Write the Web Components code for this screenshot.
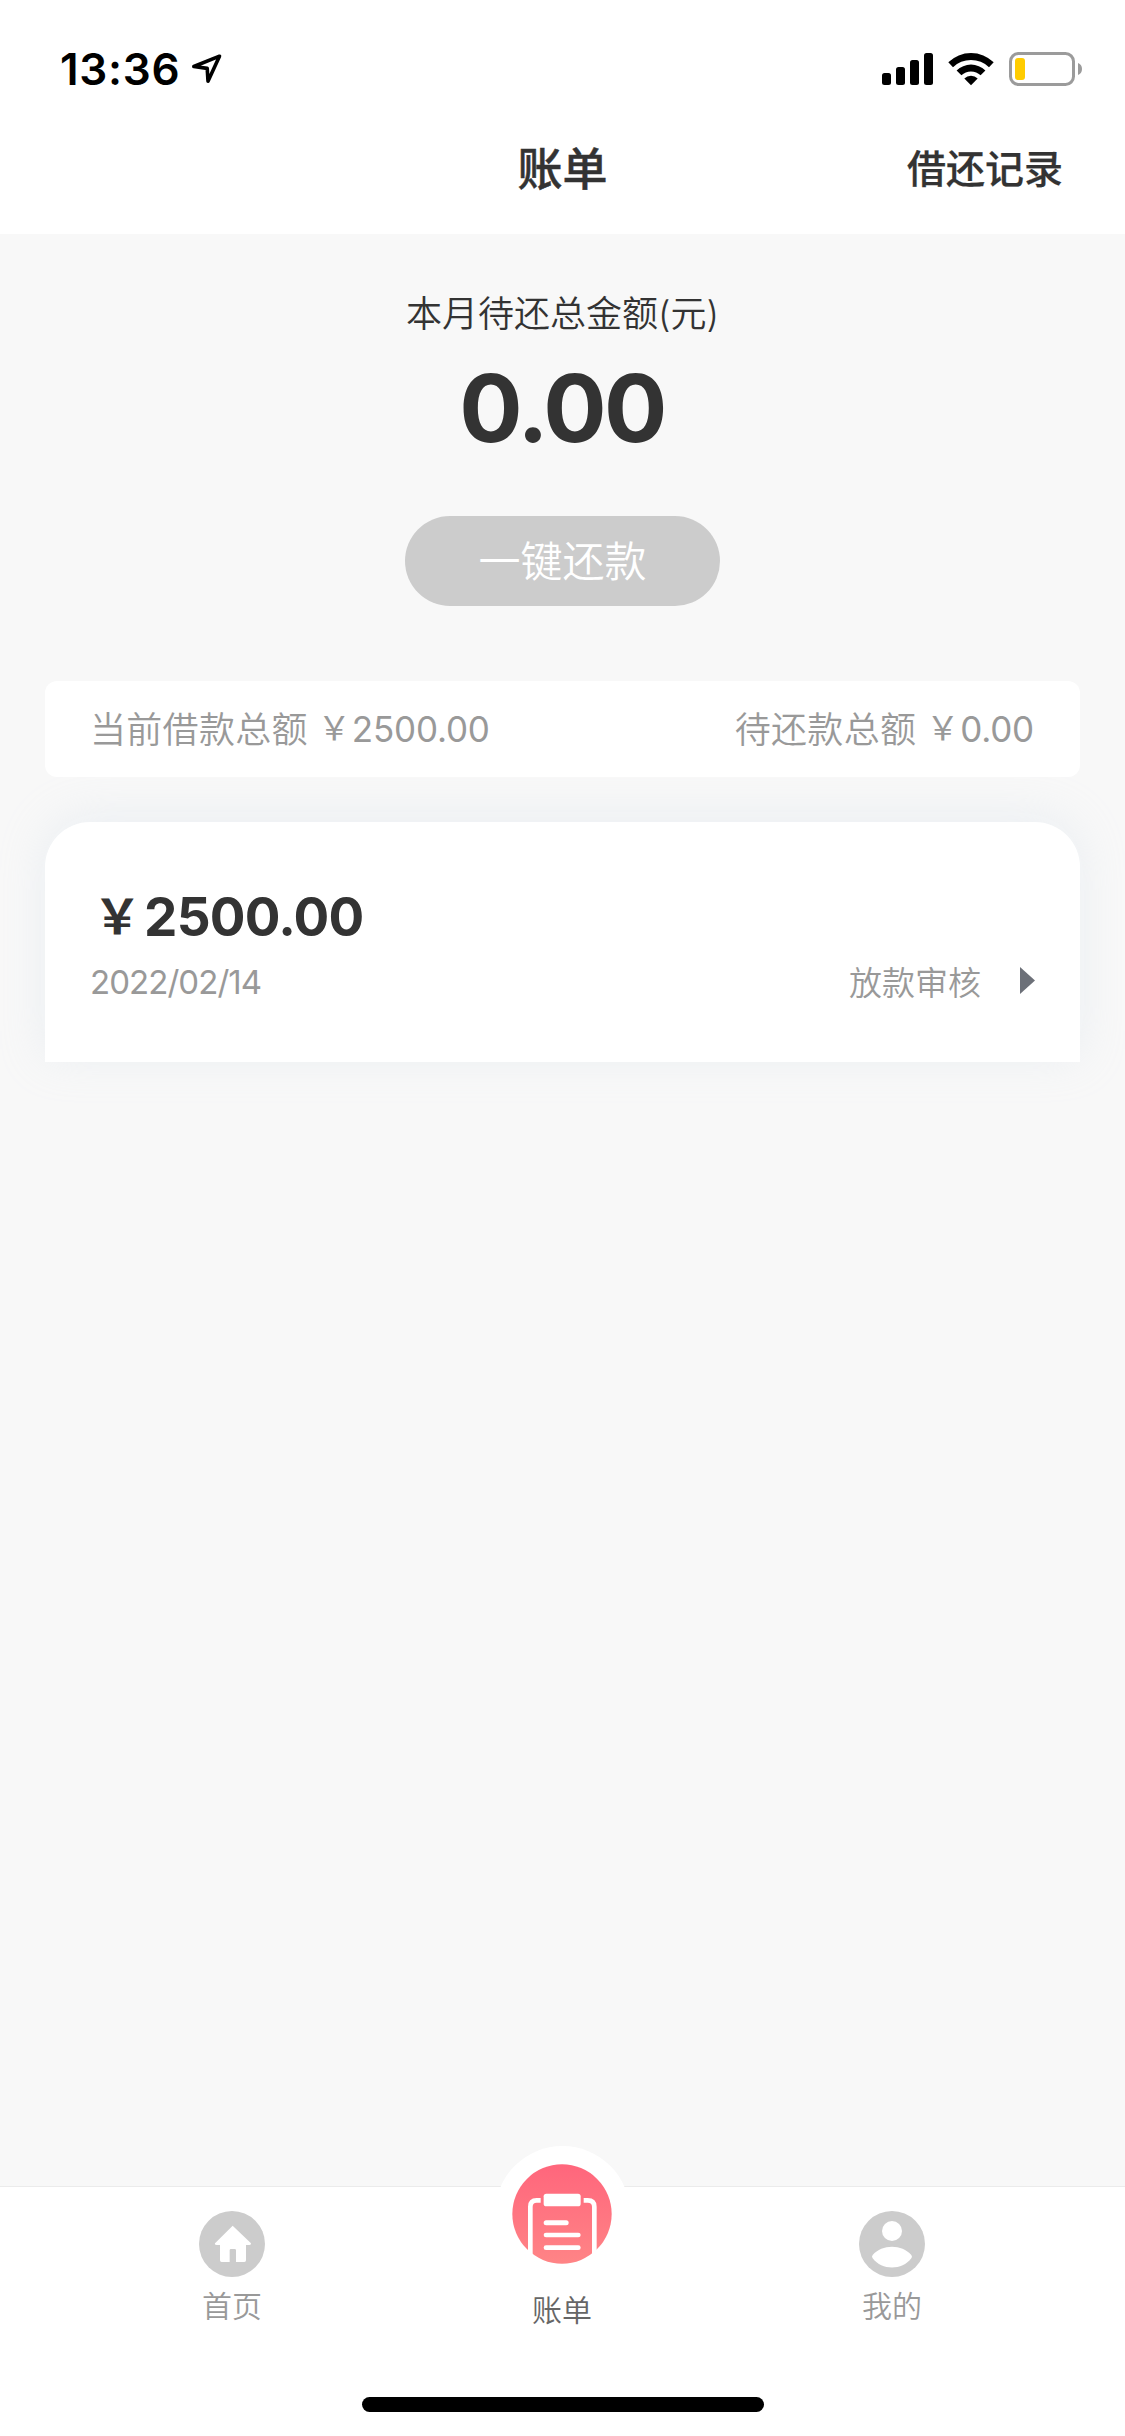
<!DOCTYPE html>
<html lang="zh-CN">
<head>
<meta charset="utf-8">
<title>账单</title>
<style>
body{margin:0;background:#f8f8f8;font-family:Inter,"Noto Sans CJK SC",sans-serif;color:#333}
</style>
</head>
<body>
<bill-app></bill-app>
<script>
const define=(name,html)=>{
  const t=document.createElement('template');
  t.innerHTML=html;
  customElements.define(name,class extends HTMLElement{
    constructor(){super();this.attachShadow({mode:'open'}).append(t.content.cloneNode(true));}
  });
};

define('status-bar',`<style>
:host{display:flex;height:99px;background:#fff;align-items:flex-start;justify-content:space-between;box-sizing:border-box;padding:48px 43px 0 60px;color:#000}
div{display:flex}
.time{font-size:44px;font-weight:600;line-height:42px;width:131px;letter-spacing:.7px;white-space:nowrap}
svg{display:block}
</style>
<div><span class="time">13:36</span>
<svg width="31" height="42" viewBox="191 48 31 42"><path d="M219.5 56.2 193.8 66.5 207.2 68.4 208 81.2Z" fill="none" stroke="#000" stroke-width="3.6" stroke-linejoin="round"/></svg></div>
<div><svg width="202" height="42" viewBox="880 48 202 42">
<rect x="882" y="73" width="9" height="12" rx="2.5"/><rect x="896" y="67" width="9" height="18" rx="2.5"/><rect x="910" y="60" width="9" height="25" rx="2.5"/><rect x="924" y="53" width="9" height="32" rx="2.5"/>
<path d="M948.3 62.3A32.5 32.5 0 0 1 993.7 62.3L989 67.2A25.8 25.8 0 0 0 953 67.2Z"/>
<path d="M956.6 70.5A20.5 20.5 0 0 1 985.4 70.5L980.6 75.3A13.8 13.8 0 0 0 961.4 75.3Z"/>
<path d="M964.3 78.4A10 10 0 0 1 977.7 78.4L971 85.2Z"/>
<rect x="1010.5" y="53.5" width="63" height="31" rx="8" fill="none" stroke="#9b9b9b" stroke-width="3"/>
<rect x="1015" y="58" width="10" height="22" rx="3" fill="#fc0"/>
<path d="M1078 63A6.5 6.5 0 0 1 1078 75Z" fill="#9b9b9b"/>
</svg></div>`);

define('nav-bar',`<style>
:host{display:grid;grid-template-columns:1fr auto 1fr;height:135px;box-sizing:border-box;padding:37px 62px 0;background:#fff;font-weight:500;line-height:68px;-webkit-text-stroke:.5px #333}
.t{grid-column:2;font-size:45px}
.a{justify-self:end;font-size:39px;line-height:66px;-webkit-text-stroke:.25px #333}
</style><span class="t"><slot></slot></span><span class="a"><slot name="action"></slot></span>`);

define('total-due',`<style>
:host{display:flex;flex-direction:column;align-items:center;height:447px}
.l{margin-top:53px;font-size:36px;font-weight:350;line-height:54px}
.n{margin-top:14px;padding-right:1px;font-size:94px;line-height:106px;font-weight:700;letter-spacing:-2.6px}
button{margin:55px 0 0;border:0;padding:1px 0 0;width:315px;height:90px;border-radius:45px;background:#ccc;color:#fff;font:350 42px/89px Inter,"Noto Sans CJK SC",sans-serif}
</style><span class="l"><slot name="label"></slot></span><span class="n"><slot name="amount"></slot></span><button><slot name="action"></slot></button>`);

define('summary-bar',`<style>
:host{display:flex;justify-content:space-between;position:relative;z-index:1;height:96px;margin:0 45px;padding:0 46px 0 45px;background:#fff;border-radius:12px;color:#999;font-size:35px;line-height:96px}
</style><slot></slot>`);

define('summary-item',`<style>
:host{display:flex}
.l{font-size:36px;font-weight:350;margin-right:9px;letter-spacing:.3px;padding-top:1px}
.y{font-family:"Noto Sans CJK SC",sans-serif;font-size:33px;width:35px;text-align:center;line-height:91px;font-weight:400}
.v{letter-spacing:-.2px}
</style><span class="l"><slot></slot></span><span class="y">￥</span><span class="v"><slot name="value"></slot></span>`);

define('loan-card',`<style>
:host{display:flex;flex-direction:column;height:240px;margin:45px 45px 0;box-sizing:border-box;padding:61px 45px 0;background:#fff;border-radius:45px 45px 0 0;box-shadow:0 -6px 45px rgba(204,216,230,.29)}
.n{display:flex;height:68px;font-size:53px;font-weight:700;line-height:68px;letter-spacing:-.75px}
.y{font-family:"Noto Sans CJK SC",sans-serif;font-size:48px;width:54px;text-align:center;line-height:60px;box-sizing:border-box}
.r{display:flex;justify-content:space-between;align-items:center;height:62px;color:#999;font-size:33px;line-height:62px}
.d{letter-spacing:-.95px}
.s{display:flex;align-items:center;gap:39px;font-weight:350;padding-top:1px}
svg{display:block;margin-top:-4px}
</style>
<div class="n"><span class="y">￥</span><slot name="amount"></slot></div>
<div class="r"><span class="d"><slot name="date"></slot></span><div class="s"><slot name="status"></slot><svg width="15" height="27" viewBox="0 0 15 27"><path d="M0 0 15 13.5 0 27Z" fill="#6c7078"/></svg></div></div>`);

define('tab-item',`<style>
:host{display:flex;flex-direction:column;align-items:center;width:330px;box-sizing:border-box;padding-top:24px;color:#999;font-size:30px;font-weight:350;line-height:36px}
:host([active]){padding:0;color:#666}
.i{height:66px;margin-bottom:11px}
:host([active]) .i{width:135px;height:135px;margin:-41px 0 11px;background:#fff;border-radius:50%;display:grid;place-items:center}
</style><div class="i"><slot name="icon"></slot></div><span><slot></slot></span>`);

define('icon-home',`<style>:host,svg{display:block}</style>
<svg width="66" height="66" viewBox="57 123 198 198"><circle cx="156" cy="222" r="99" fill="#ccc"/><path d="M158 167 213 220Q214 225 208 225H198V271Q198 276 193 276H168V241Q168 237 164 237H153Q149 237 149 241V276H125Q120 276 120 271V225H110Q103 225 105 220Z" fill="#fff"/></svg>`);
define('icon-bill',`<style>:host,svg{display:block}</style>
<svg width="100" height="100" viewBox="97 101 300 300"><defs><linearGradient id="g" x2="0" y2="1"><stop stop-color="#ff667c"/><stop offset="1" stop-color="#ff8486"/></linearGradient></defs>
<circle cx="247" cy="251" r="149" fill="url(#g)"/>
<path d="M183 210H171Q152 210 152 229V380M312 210H324Q344 210 344 229V380" fill="none" stroke="#fff" stroke-width="14"/>
<g fill="#fff"><rect x="192" y="190" width="111" height="38" rx="8"/><rect x="192" y="270" width="75" height="15" rx="7.5"/><rect x="192" y="307" width="111" height="14" rx="7"/><rect x="192" y="345" width="111" height="14" rx="7"/></g></svg>`);
define('icon-user',`<style>:host,svg{display:block}</style>
<svg width="66" height="66" viewBox="57 123 198 198"><circle cx="156" cy="222" r="99" fill="#ccc"/><g fill="#fff"><circle cx="156" cy="183" r="30"/><path d="M98 255C126 222 186 222 214 255Q218 260 214 265C186 302 126 302 98 265Q94 260 98 255Z"/></g></svg>`);

define('tab-bar',`<style>
:host{display:flex;flex-direction:column;align-items:center;height:250px;box-sizing:border-box;background:#fff;border-top:1px solid #ebebeb}
.t{display:flex;height:210px;padding-right:1px}
.h{width:402px;height:15px;border-radius:8px;background:#000}
</style><div class="t"><slot></slot></div><div class="h"></div>`);

define('bill-app',`<style>
:host{display:flex;flex-direction:column;width:1125px;height:2436px;overflow:hidden;background:#f8f8f8}
tab-bar{margin-top:auto}
</style>
<status-bar></status-bar>
<nav-bar>账单<span slot="action">借还记录</span></nav-bar>
<total-due><span slot="label">本月待还总金额(元)</span><span slot="amount">0.00</span><span slot="action">一键还款</span></total-due>
<summary-bar><summary-item>当前借款总额<span slot="value">2500.00</span></summary-item><summary-item>待还款总额<span slot="value">0.00</span></summary-item></summary-bar>
<loan-card><span slot="amount">2500.00</span><span slot="date">2022/02/14</span><span slot="status">放款审核</span></loan-card>
<tab-bar><tab-item><icon-home slot="icon"></icon-home>首页</tab-item><tab-item active><icon-bill slot="icon"></icon-bill>账单</tab-item><tab-item><icon-user slot="icon"></icon-user>我的</tab-item></tab-bar>`);
</script>
</body>
</html>
